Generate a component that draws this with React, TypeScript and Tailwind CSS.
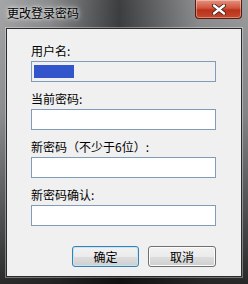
import React from 'react';

const font = { fontFamily: '"Noto Sans CJK SC", "Liberation Sans", sans-serif' };

function Field({ label, readOnly }: { label: string; readOnly?: boolean }) {
  return (
    <div className="flex flex-col">
      <div className="text-[12px] leading-[14px] text-black h-[14px] whitespace-nowrap">{label}</div>
      <div
        className={`mt-[3px] w-[185px] h-[21px] border border-[#7f9db9] ${
          readOnly ? 'bg-[#f0f0f0]' : 'bg-white'
        } flex items-center px-[1px]`}
      >
        {readOnly && <div className="ml-[1px] w-[40px] h-[13px] bg-[#3355cc]" />}
      </div>
    </div>
  );
}

export default function App() {
  return (
    <div
      className="w-[248px] h-[284px] flex flex-col overflow-hidden bg-[linear-gradient(180deg,rgba(0,0,0,0)_0%,rgba(0,0,0,0.15)_40%,rgba(0,0,0,0.75)_100%),linear-gradient(90deg,#a4a6a8_0%,#8a8c8e_20%,#3c3e40_48%,#5a5c5e_60%,#8c8e90_80%,#9a9c9e_100%)]"
      style={font}
    >
      {/* Title bar */}
      <div className="h-[28px] flex items-start shrink-0">
        <div className="pl-[7px] pt-[6px] text-[12px] leading-[14px] text-black [text-shadow:0_0_6px_rgba(255,255,255,0.9),0_0_3px_rgba(255,255,255,0.8)]">
          更改登录密码
        </div>
        <div className="ml-auto mr-[6px] w-[47px] h-[19px] rounded-b-[4px] border border-t-0 border-[#5a1a10] bg-[linear-gradient(180deg,#e6927e_0%,#d0553d_45%,#b8321c_55%,#c8482c_100%)] shadow-[inset_0_0_0_1px_rgba(255,255,255,0.35)] flex items-center justify-center">
          <svg width="14" height="11" viewBox="0 0 14 11">
            <path d="M2 1.5 L12 9.5 M12 1.5 L2 9.5" stroke="#3a1a14" strokeWidth="4" strokeLinecap="round" />
            <path d="M2 1.5 L12 9.5 M12 1.5 L2 9.5" stroke="#ffffff" strokeWidth="2.4" strokeLinecap="round" />
          </svg>
        </div>
      </div>

      {/* Client area */}
      <div className="mx-[6px] mb-[7px] flex-1 border border-[#2a2a2a] bg-[#f0f0f0] shadow-[0_0_0_1px_rgba(255,255,255,0.35)] pl-[24px] pt-[15px] flex flex-col">
        <div className="flex flex-col gap-[10px]">
          <Field label="用户名:" readOnly />
          <Field label="当前密码:" />
          <Field label="新密码（不少于6位）:" />
          <Field label="新密码确认:" />
        </div>
        <div className="mt-[20px] w-[185px] flex justify-end gap-[9px]">
          <button className="w-[67px] h-[21px] rounded-[3px] border border-[#3c7fb1] bg-[linear-gradient(180deg,#f2f2f2_0%,#ebebeb_50%,#dddddd_51%,#cfcfcf_100%)] shadow-[inset_0_0_0_1px_#c4e5f6] text-[12px] leading-[14px] text-black" style={font}>
            确定
          </button>
          <button className="w-[68px] h-[21px] rounded-[3px] border border-[#707070] bg-[linear-gradient(180deg,#f2f2f2_0%,#ebebeb_50%,#dddddd_51%,#cfcfcf_100%)] shadow-[inset_0_0_0_1px_#fcfcfc] text-[12px] leading-[14px] text-black" style={font}>
            取消
          </button>
        </div>
      </div>
    </div>
  );
}
